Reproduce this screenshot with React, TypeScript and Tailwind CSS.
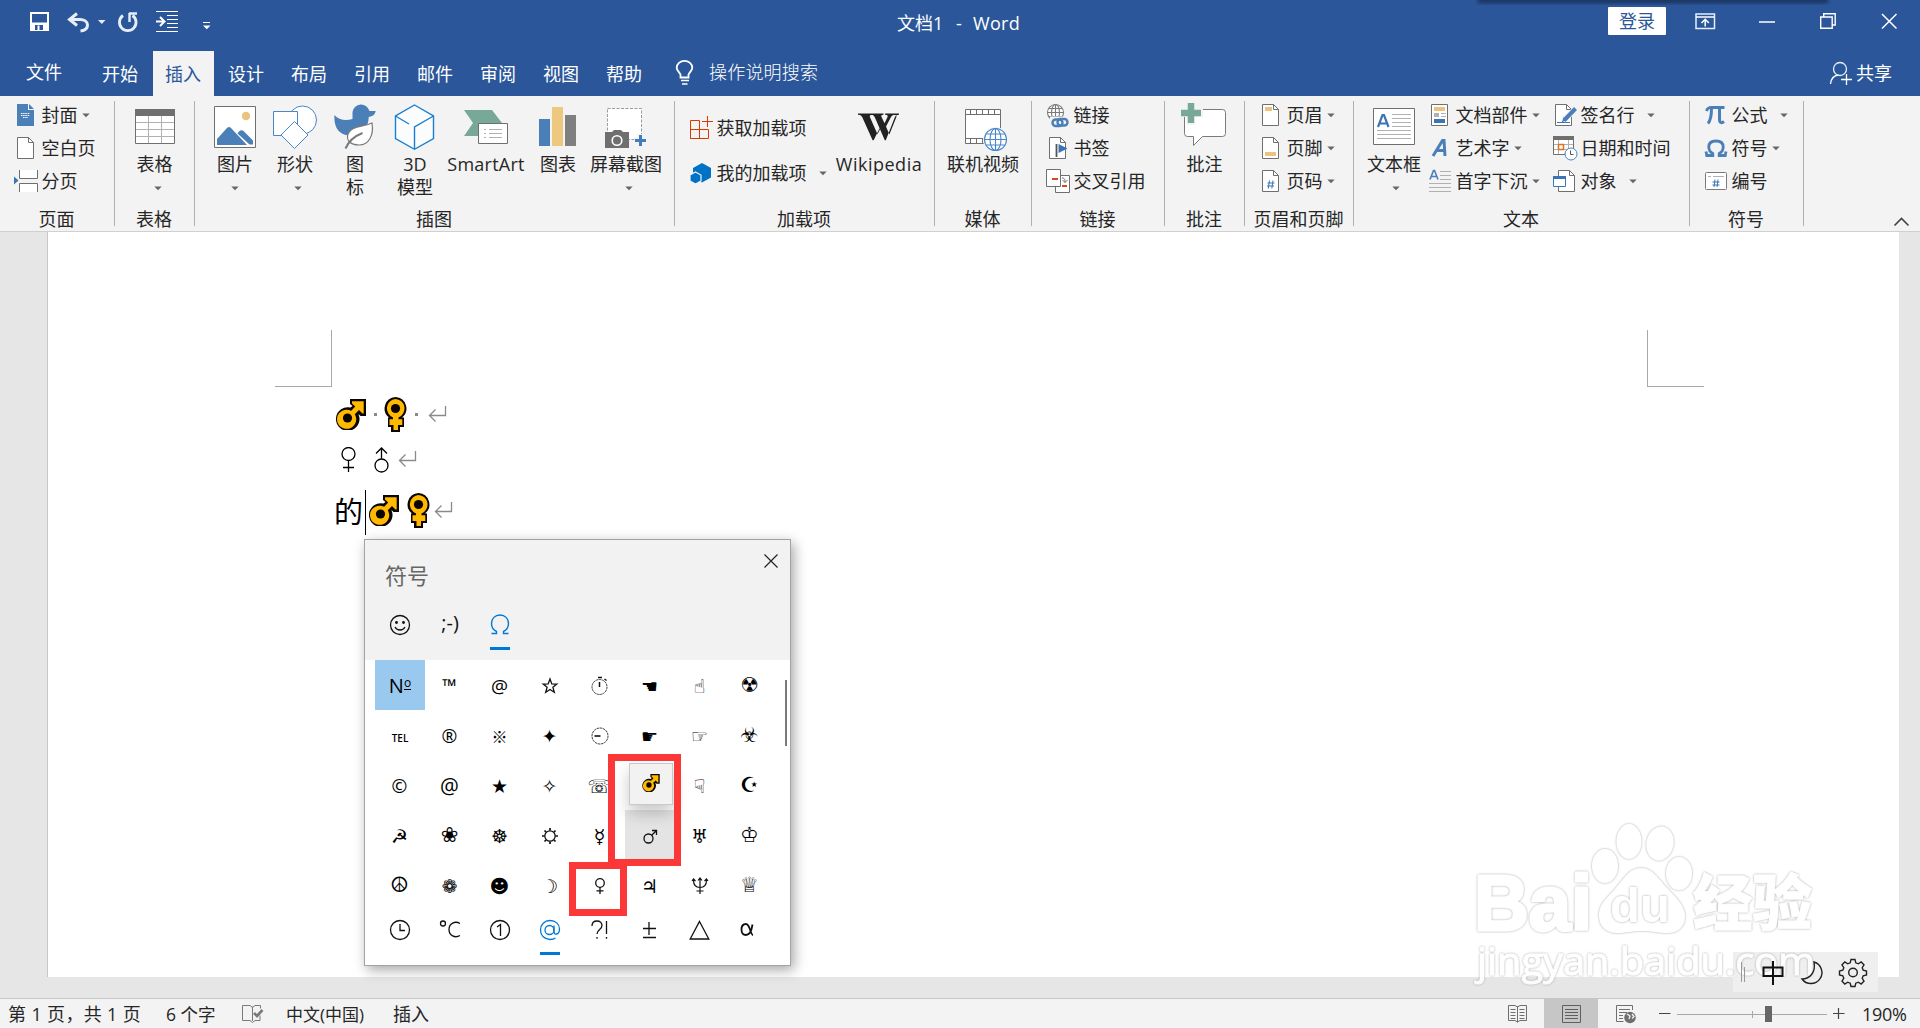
import React from "react";

const UI = "font-['Open_Sans','Noto_Sans_CJK_SC',sans-serif]";

type Box = { x: number; y: number; w: number; h: number; children?: React.ReactNode; className?: string };

/* Icon canvas: the drawing inside uses window coordinates. */
function Ico({ x, y, w, h, children, className = "" }: Box) {
  return (
    <svg className={"shrink-0 " + className} width={w} height={h} viewBox={`${x} ${y} ${w} ${h}`} fill="none">
      {children}
    </svg>
  );
}

function Arrow({ className = "" }: { className?: string }) {
  return (
    <svg className={"shrink-0 " + className} width="8" height="5" viewBox="0 0 8 5">
      <path d="M0.3 0.5h7.4L4 4.3z" fill="#666" />
    </svg>
  );
}

function Group({ label, width, children }: { label: string; width: string; children?: React.ReactNode }) {
  return (
    <div className={"flex h-[135px] shrink-0 " + width}>
      <div className="flex min-w-0 flex-1 flex-col">
        <div className="flex h-[110px]">{children}</div>
        <div className="flex h-[25px] justify-center whitespace-nowrap pr-px leading-[26px]">{label}</div>
      </div>
      <div className="mt-[5px] h-[125px] w-px bg-[#b1b1b1]" />
    </div>
  );
}

type BigProps = { x: number; w: number; width: string; lines: string[]; arrow?: string; children?: React.ReactNode };
function Big({ x, w, width, lines, arrow, children }: BigProps) {
  return (
    <div className={"flex shrink-0 flex-col items-center " + width}>
      <Ico x={x} y={96} w={w} h={57}>{children}</Ico>
      {lines.map((l) => (
        <span key={l} className="whitespace-nowrap leading-[23px]">{l}</span>
      ))}
      {arrow && <Arrow className={"mt-[10px] " + arrow} />}
    </div>
  );
}

type RowProps = { x: number; y: number; text: string; arrow?: string; children?: React.ReactNode; h?: number };
function Row({ x, y, text, arrow, children, h = 33 }: RowProps) {
  return (
    <div className="flex items-center">
      <Ico x={x} y={y} w={28} h={h}>{children}</Ico>
      <span className="-ml-[0.500px] mr-[0.500px] whitespace-nowrap leading-[33px]">{text}</span>
      {arrow && <Arrow className={arrow} />}
    </div>
  );
}

function Page({ x, y, fill = "#fff", stroke = "#6f6f6f" }: { x: number; y: number; fill?: string; stroke?: string }) {
  return (
    <g transform={`translate(${x} ${y})`}>
      <path d="M.5.5h11l5 5v16h-16z" fill={fill} stroke={stroke} />
      <path d="M11.5.5v5h5" stroke={stroke} />
    </g>
  );
}

function Globe({ cx, cy, r, c }: { cx: number; cy: number; r: number; c: string }) {
  return (
    <g stroke={c} strokeWidth="1.1">
      <circle cx={cx} cy={cy} r={r} fill="#fff" />
      <ellipse cx={cx} cy={cy} rx={r * 0.5} ry={r} />
      <path d={`M${cx} ${cy - r}V${cy + r}M${cx - r} ${cy}H${cx + r}M${cx - r * 0.85} ${cy - r / 2}H${cx + r * 0.85}M${cx - r * 0.85} ${cy + r / 2}H${cx + r * 0.85}`} />
    </g>
  );
}

function TitleBar() {
  return (
    <div className="flex h-[51px] items-start text-white">
      <Ico x={0} y={0} w={240} h={51}>
        <path d="M31 13h17v17h-17z" stroke="#fff" strokeWidth="2" />
        <path d="M30 22.500h19v8h-19z" fill="#fff" />
        <path d="M35 25h8v5h-8z" fill="#2b579a" />
        <path d="M37.500 25.500h2v4.500h-2z" fill="#fff" />
        <path d="M77 13.500l-7.500 6 7.500 6M70 19.500h10c4 0 7.500 2 7.500 5.500s-2.500 5.500-7 6" stroke="#e8eef8" strokeWidth="3" />
        <path d="M98 20h7.500l-3.700 4z" fill="#e8eef8" />
        <path d="M123 15.500a8.300 8.300 0 1 0 9.500 0" stroke="#e8eef8" strokeWidth="2.800" />
        <path d="M129 13.500h8M129.500 13v9" stroke="#e8eef8" strokeWidth="2.400" />
        <path d="M156 11.500h22M167 15.500h11M167 19.500h11M167 23.500h11M167 27.500h11M156 31.500h22" stroke="#fff" />
        <path d="M156 21.500h8M160 17l4.500 4.500-4.500 4.500" stroke="#fff" strokeWidth="2" />
        <path d="M203 22.500h7" stroke="#fff" />
        <path d="M203 25.500h7.500l-3.700 3.800z" fill="#fff" />
      </Ico>
      <div className="ml-[657px] flex w-[140px] whitespace-pre text-[18px] leading-[46px]">
        <span className="w-[59px]">文档1</span>
        <span className="w-[17px]">-</span>
        <span className="tracking-[0.300px]">Word</span>
      </div>
      <div className="ml-[571px] mt-[7px] flex h-[28px] w-[58px] items-center justify-center whitespace-nowrap rounded-[1px] bg-white text-[18px] leading-[28px] text-[#2b579a]">登录</div>
      <Ico x={1668} y={0} w={240} h={51} className="ml-[2px]">
        <path d="M1696 14h18.500v14.500h-18.500z" stroke="#e8eef8" strokeWidth="1.500" />
        <path d="M1696 17h18M1705.200 26.500v-7M1701.500 23l3.700-3.700 3.700 3.700" stroke="#fff" strokeWidth="1.500" />
        <path d="M1759 22h16" stroke="#fff" strokeWidth="1.500" />
        <path d="M1820.700 17h11.500v11.200h-11.500zM1823.700 17v-3.200h11.500V25h-3" stroke="#fff" strokeWidth="1.400" />
        <path d="M1882 14l14.500 14.500M1896.500 14L1882 28.500" stroke="#fff" strokeWidth="1.500" />
      </Ico>
    </div>
  );
}

const tabs = ["开始", "插入", "设计", "布局", "引用", "邮件", "审阅", "视图", "帮助"];

function TabBar() {
  return (
    <div className="flex h-[45px] text-[18px] text-white">
      <div className="w-[89px] pl-[26px] leading-[42px]">文件</div>
      {tabs.map((t) => (
        <div key={t} className={"mx-px w-[61px] text-center leading-[46px] " + (t === "插入" ? "bg-[#f3f3f3] text-[#2b579a]" : "")}>
          <span className="-ml-px">{t}</span>
        </div>
      ))}
      <Ico x={671} y={51} w={36} h={45} className="ml-[15px]">
        <path d="M680.500 77.500v-3c-1-2.500-3.800-4-3.800-6.800a7.700 6.700 0 0 1 15.600 0c0 2.800-2.800 4.300-3.800 6.800v3z" stroke="#fff" strokeWidth="1.800" />
        <path d="M681 80.500h8M682 84h5.500" stroke="#fff" strokeWidth="1.600" />
      </Ico>
      <div className="ml-[2px] w-[200px] font-light leading-[42px] tracking-[0.200px]">操作说明搜索</div>
      <Ico x={1828} y={51} w={26} h={45} className="ml-[919px]">
        <circle cx="1840" cy="69" r="6.500" stroke="#e8eef8" strokeWidth="1.300" />
        <path d="M1830.500 84c.5-5 3.500-8.500 8-9M1841 79.500h11M1846.500 74v11" stroke="#fff" strokeWidth="1.300" />
      </Ico>
      <div className="ml-[2px] leading-[44px]">共享</div>
    </div>
  );
}

function HashPage({ x, y }: { x: number; y: number }) {
  return (
    <>
      <Page x={x} y={y} />
      <path d={`M${x + 7.500} ${y + 10.500}l-1.200 8M${x + 11} ${y + 10.500}l-1.200 8M${x + 5.500} ${y + 13}h7M${x + 5} ${y + 16}h7`} stroke="#3a74b4" strokeWidth="1" />
    </>
  );
}

function Ribbon() {
  return (
    <div className="flex h-[136px] border-b border-[#d2d0ce] bg-[#f3f3f3] text-[18px] text-[#262626]">
      <Group label="页面" width="w-[115px]">
        <div className="ml-[14px] flex flex-col pt-[3px]">
          <Row x={14} y={99} text="封面" arrow="ml-[4px]">
            <path d="M17 104h11v6h6v16H17z" fill="#4a7fb8" />
            <path d="M29 104l5 5h-5z" fill="#4a7fb8" />
            <path d="M21 113.500h9M21 115.500h9M23 117.500h5" stroke="#fff" strokeDasharray="1.500 .7" />
          </Row>
          <Row x={14} y={132} text="空白页"><Page x={17} y={137} /></Row>
          <Row x={14} y={165} text="分页">
            <path d="M14 176.500l4.500 4-4.500 4z" fill="#3a74b4" />
            <path d="M19.500 170v8.500h18V170M19.500 192v-8.500h18v8.500" fill="#fff" stroke="#6f6f6f" />
          </Row>
        </div>
      </Group>
      <Group label="表格" width="w-[80px]">
        <Big x={115} w={80} width="w-[79px]" lines={["表格"]} arrow="translate-x-[3px]">
          <path d="M135.500 109.500h39v34h-39z" fill="#fff" stroke="#6f6f6f" />
          <path d="M135 109h40v7h-40z" fill="#6f6f6f" />
          <path d="M136 122.500h38M136 129.500h38M136 136.500h38M148.500 116v27M161.500 116v27" stroke="#b1b1b1" />
        </Big>
      </Group>
      <Group label="插图" width="w-[480px]">
        <div className="flex pl-[10px]">
          <Big x={205} w={60} width="w-[60px]" lines={["图片"]} arrow="translate-x-0">
            <path d="M214.500 106.500h41v41h-41z" fill="#fff" stroke="#6f6f6f" />
            <circle cx="246" cy="116" r="4.200" fill="#eac282" />
            <path d="M217 145v-6l10-11q2-2 4 0l16 17z" fill="#4a7fb8" />
            <path d="M237.500 133.500l1.500-2q2.500-2.500 5 0l9 9v4h-3.500z" fill="#4a7fb8" />
          </Big>
          <Big x={265} w={60} width="w-[60px]" lines={["形状"]} arrow="translate-x-[3px]">
            <circle cx="302.500" cy="120" r="14" fill="#fff" stroke="#4a86c8" />
            <path d="M273.500 111.500h24v24h-24z" fill="#fff" stroke="#4a86c8" />
            <path d="M294.500 121.500l13.500 13.500-13.500 13.500L281 135z" fill="#fff" stroke="#4a86c8" />
          </Big>
          <Big x={325} w={60} width="w-[60px]" lines={["图", "标"]}>
            <path d="M334.500 115c4 5 11 6 18 4v-7a8.700 8.700 0 0 1 17-1h6.200c-.5 3.500-3 5.500-7 6 0 9-6 18.500-18 18.500-13 0-17-10-16.200-20.500z" fill="#4a7fb8" />
            <path d="M372 123c2 12-3 22-13 22-9 0-13-5-11-11 3-8 15-7 24-11z" fill="#fff" stroke="#7a7a7a" strokeWidth="1.200" />
            <path d="M345.500 148.500c3-7 8-12 17-15.500" stroke="#7a7a7a" strokeWidth="2" />
          </Big>
          <Big x={385} w={60} width="w-[60px]" lines={["3D", "模型"]}>
            <path d="M414.500 105l19 11v22.500l-19 10.800-19-10.800V116z" fill="#fafcfe" stroke="#1a7fd0" strokeWidth="1.400" />
            <path d="M395.500 116l13.500 8M433.500 116l-19 11v22" stroke="#1a7fd0" strokeWidth="1.400" />
          </Big>
          <Big x={445} w={82} width="w-[82px] tracking-[0.250px]" lines={["SmartArt"]}>
            <path d="M464 110h28l10 13-10 13h-28l9-13z" fill="#78a898" />
            <path d="M478.500 123.500h29v20h-29z" fill="#fff" stroke="#6f6f6f" />
            <path d="M484 129.500h2M484 133.500h2M484 137.500h2M489 129.500h13M489 133.500h13M489 137.500h13" stroke="#b1b1b1" />
          </Big>
          <Big x={527} w={62} width="w-[62px]" lines={["图表"]}>
            <path d="M539 119h11v27h-11z" fill="#4a7fb8" />
            <path d="M552 107h11v39h-11z" fill="#eec87f" />
            <path d="M565 115h11v31h-11z" fill="#7f7f7f" />
          </Big>
          <Big x={589} w={74} width="w-[74px]" lines={["屏幕截图"]} arrow="translate-x-[3px]">
            <path d="M607.500 108.500h34v31h-34z" fill="#fff" stroke="#9a9a9a" strokeDasharray="3 1.500" />
            <path d="M606 132h6l2-2h7l2 2h6v16h-24v-16z" fill="#6f6f6f" />
            <circle cx="617" cy="140.500" r="4.800" stroke="#fff" strokeWidth="1.600" />
            <path d="M640.500 134v13M634.500 140.500h13" stroke="#f3f3f3" strokeWidth="6" />
            <path d="M640.500 135v11M635 140.500h11" stroke="#3f7cc0" strokeWidth="3" />
          </Big>
        </div>
      </Group>
      <Group label="加载项" width="w-[260px]">
        <div className="ml-[14px] flex w-[145px] shrink-0 flex-col pt-[10px]">
          <div className="flex h-[45px]">
            <Row x={689} y={106} h={45} text="获取加载项">
              <path d="M690.500 120.500h9v18h-9zM690.500 129.500h18v9h-18z" stroke="#d83b01" />
              <path d="M699.500 129.500v9M707.500 116v11M702 121.500h11" stroke="#d83b01" />
            </Row>
          </div>
          <div className="flex h-[45px]">
            <Row x={689} y={151} h={45} text="我的加载项" arrow="ml-[12px]">
              <path d="M702 163l9 5v9.500l-9 5-9-5V168z" fill="#0072c6" />
              <path d="M695.500 172l5.500 3v6l-5.500 3-5.500-3v-6z" fill="#0072c6" stroke="#f3f3f3" strokeWidth="1.200" />
            </Row>
          </div>
        </div>
        <Big x={834} w={90} width="w-[90px] tracking-[0.500px]" lines={["Wikipedia"]}>
          <path d="M858 113.500h14.500v1.200c-2.500.2-3.200.8-2.500 2.500l7.500 17 2.500-5-5-11.500c-.8-1.800-1.500-2.800-3.500-3v-1.200h12v1.200c-2.500.2-2.500.8-1.800 2.500l2.800 6 2.800-5.800c.9-1.900.4-2.600-2.200-2.700v-1.200h9.900v1.200c-2.200 0-3.300.8-4.200 2.700l-4.800 9.200 3.400 7.800 6.800-17c.8-1.900 0-2.600-2.500-2.700v-1.200H899v1.200c-2.500 0-3.600 1.200-4.300 2.900L885.800 140.300h-1l-5.200-12-6 12h-1l-10.200-22.700c-.7-1.700-1.800-2.900-4.400-2.900z" fill="#222" />
        </Big>
      </Group>
      <Group label="媒体" width="w-[97px]">
        <Big x={935} w={97} width="w-[96px]" lines={["联机视频"]}>
          <path d="M965.500 109.500h35v34h-35z" fill="#fff" stroke="#6f6f6f" />
          <path d="M965 114.500h36M965 138.500h36M970.500 109v5M976.500 109v5M982.500 109v5M988.500 109v5M994.500 109v5M970.500 139v5M976.500 139v5M982.500 139v5" stroke="#6f6f6f" />
          <circle cx="995.500" cy="139.500" r="12.500" fill="#f3f3f3" />
          <Globe cx={995.500} cy={139.500} r={11} c="#4a86c8" />
        </Big>
      </Group>
      <Group label="链接" width="w-[133px]">
        <div className="ml-[14px] flex flex-col pt-[3px]">
          <Row x={1046} y={99} text="链接">
            <Globe cx={1055.500} cy={112.500} r={8} c="#7a7a7a" />
            <rect x="1050" y="116.500" width="20" height="12" fill="#f3f3f3" />
            <rect x="1052.500" y="119.500" width="10" height="6.500" rx="3.200" stroke="#4a7fb8" strokeWidth="2.400" />
            <rect x="1057.500" y="119" width="10" height="6.500" rx="3.200" stroke="#4a7fb8" strokeWidth="2.400" />
          </Row>
          <Row x={1046} y={132} text="书签">
            <Page x={1049} y={137} />
            <path d="M1056.500 144v13" stroke="#555" strokeWidth="1.800" />
            <path d="M1058.500 144v9l9-4.500z" fill="#3a74b4" />
          </Row>
          <Row x={1046} y={165} text="交叉引用">
            <path d="M1055.500 175.500h14v17h-14z" fill="#fff" stroke="#6f6f6f" />
            <path d="M1046.500 169.500h14v17h-14z" fill="#fff" stroke="#6f6f6f" />
            <path d="M1052 179h6M1062 186h5" stroke="#d8481e" strokeWidth="2" />
            <path d="M1062 178c3 0 3 2 3 4.500M1062.500 180l2.500 2.500 2.500-2.500" stroke="#6f6f6f" />
          </Row>
        </div>
      </Group>
      <Group label="批注" width="w-[80px]">
        <Big x={1165} w={80} width="w-[79px]" lines={["批注"]}>
          <path d="M1184.500 109.500h38q3 0 3 3v21q0 3-3 3h-20l-9 9v-9h-6q-3 0-3-3z" fill="#fff" stroke="#7a7a7a" />
          <path d="M1190.500 101v24M1179 113h24" stroke="#f3f3f3" strokeWidth="8" />
          <path d="M1191 103v20M1181 113h20" stroke="#78a898" strokeWidth="6.500" />
        </Big>
      </Group>
      <Group label="页眉和页脚" width="w-[109px]">
        <div className="ml-[14px] flex flex-col pt-[3px]">
          <Row x={1259} y={99} text="页眉" arrow="ml-[4px]">
            <Page x={1262} y={104} />
            <path d="M1265 107h7v4h-7z" fill="#eac282" />
          </Row>
          <Row x={1259} y={132} text="页脚" arrow="ml-[4px]">
            <Page x={1262} y={137} />
            <path d="M1265 152h11v4h-11z" fill="#eac282" />
          </Row>
          <Row x={1259} y={165} text="页码" arrow="ml-[4px]"><HashPage x={1262} y={170} /></Row>
        </div>
      </Group>
      <Group label="文本" width="w-[336px]">
        <Big x={1354} w={74} width="ml-[3px] w-[74px]" lines={["文本框"]} arrow="translate-x-[2px]">
          <path d="M1370.500 108.500h41v36h-41z" fill="#fff" stroke="#6f6f6f" />
          <path d="M1389 114.500h19M1389 118.500h19M1389 122.500h19M1389 126.500h19M1374 130.500h34M1374 134.500h34M1374 138.500h34" stroke="#b1b1b1" />
          <path d="M1375 127l4.500-12h1.500l4.500 12M1377 123.500h6.500" stroke="#3a74b4" strokeWidth="2.200" />
        </Big>
        <div className="ml-[-3px] flex w-[125px] flex-col pt-[3px]">
          <Row x={1428} y={99} text="文档部件" arrow="ml-[4px]">
            <path d="M1431.500 104.500h16v21h-16z" fill="#fff" stroke="#6f6f6f" />
            <path d="M1434 107h11v4h-11z" fill="#eac282" />
            <path d="M1434 113h5v4h-5z" fill="#b1b1b1" />
            <path d="M1441 113.500h5M1441 116.500h5" stroke="#b1b1b1" />
            <path d="M1434 119h11v4h-11z" fill="#3a74b4" />
          </Row>
          <Row x={1428} y={132} text="艺术字" arrow="ml-[4px]">
            <path d="M1433 156l9.500-15.500h1.500l1 15.500M1436.500 150.500h8" stroke="#4a7fb8" strokeWidth="3" />
          </Row>
          <Row x={1428} y={165} text="首字下沉" arrow="ml-[4px]">
            <path d="M1430 179.500l3.500-9h1l3.500 9M1431 176.500h6" stroke="#4a7fb8" strokeWidth="1.600" />
            <path d="M1440 171.500h11M1440 175.500h11M1440 179.500h11M1429 183.500h22M1429 187.500h22M1429 191.500h22" stroke="#b1b1b1" />
          </Row>
        </div>
        <div className="flex flex-col pt-[3px]">
          <Row x={1553} y={99} text="签名行" arrow="ml-[12px]">
            <path d="M1555.500 104.500h11l5 5v16h-16z" fill="#fff" stroke="#6f6f6f" />
            <path d="M1566.500 104.500v5h5" stroke="#6f6f6f" />
            <path d="M1557 122.500h13" stroke="#3a74b4" />
            <path d="M1576 109l-12.500 11" stroke="#f3f3f3" strokeWidth="6" />
            <path d="M1575.500 108.500l-11.500 12" stroke="#4a7fb8" strokeWidth="4" />
            <path d="M1564 117l3 3-5.500 2.500z" fill="#4a7fb8" />
          </Row>
          <Row x={1553} y={132} text="日期和时间">
            <path d="M1553.500 136.500h20v18h-20z" fill="#fff" stroke="#6f6f6f" />
            <path d="M1553 136h21v4h-21z" fill="#6f6f6f" />
            <path d="M1558.500 140v14M1568.500 140v14M1554 144.500h19M1554 149.500h19" stroke="#b1b1b1" />
            <path d="M1558.500 144.500h5v5h-5z" fill="#fff" stroke="#e07020" strokeWidth="1.500" />
            <circle cx="1571" cy="154" r="6" fill="#fff" stroke="#4a86c8" />
            <path d="M1570.500 150.500v4h3" stroke="#555" />
          </Row>
          <Row x={1553} y={165} text="对象" arrow="ml-[12px]">
            <Page x={1558} y={170} />
            <path d="M1553.500 176.500h12v10h-12z" fill="#fff" stroke="#3a74b4" />
            <path d="M1553 176h13v3h-13z" fill="#3a74b4" />
          </Row>
        </div>
      </Group>
      <Group label="符号" width="w-[114px]">
        <div className="ml-[14px] flex flex-col pt-[3px]">
          <Row x={1704} y={99} text="公式" arrow="ml-[12px]">
            <path d="M1706.500 111c1-3 2-3.500 5-3.500h13M1711.500 108c0 6-.5 12-3.500 15.500M1719.500 108v11c0 4 2 4.500 4.500 2.500" stroke="#4a7fb8" strokeWidth="3" />
          </Row>
          <Row x={1704} y={132} text="符号" arrow="ml-[4px]">
            <path d="M1706 151.500l.8 4h6v-2c-3-1.500-4-4-4-6.500 0-4 2.500-6 7.200-6s7.200 2 7.200 6c0 2.500-1 5-4 6.500v2h6l.8-4" stroke="#4a7fb8" strokeWidth="2.800" />
          </Row>
          <Row x={1704} y={165} text="编号">
            <rect x="1705.500" y="172.500" width="21" height="17" fill="#fff" stroke="#7a7a7a" rx="1" />
            <path d="M1708 176.500h3M1713 176.500h11" stroke="#b1b1b1" />
            <path d="M1715 179.500l-1 7.500M1718 179.500l-1 7.500M1712.500 182h7M1712.500 185h7" stroke="#3a74b4" />
          </Row>
        </div>
      </Group>
      <Ico x={1890} y={213} w={22} h={18} className="ml-[86px] mt-[117px]">
        <path d="M1894.500 225.500l7-7 7 7" stroke="#444" strokeWidth="1.600" />
      </Ico>
    </div>
  );
}

function Male({ className = "" }: { className?: string }) {
  return (
    <svg className={"shrink-0 " + className} viewBox="0 0 30 31" fill="none">
      <path d="M14 0h16v17H24.500l-2-2 1 4a11.800 11.800 0 1 1-9-10.500l2-1.500-2.500-2z" fill="#0a0500" />
      <path d="M16 2.300h11.700V14.500h-1.200l-3.500-3.500-4.200 4.200a9.600 9.600 0 1 1-3.600-3.400l4-4.300L16 4.500z" fill="#ffb900" />
      <circle cx="11.500" cy="19" r="4.600" fill="#0a0500" />
    </svg>
  );
}

function Female({ className = "" }: { className?: string }) {
  return (
    <svg className={"shrink-0 " + className} width="23" height="35" viewBox="0 0 23 35" fill="none">
      <path d="M11.500 0a11.500 11.500 0 0 1 6.500 20.500h2V30h-4v5H7v-5H4v-9.500h1A11.500 11.500 0 0 1 11.500 0z" fill="#0a0500" />
      <path d="M11.500 1.900a9.600 9.600 0 0 1 3 18.500V22.300H18.300v5.600h-4.300V33h-4.500V27.900H5.500V22.300H9v-1.900a9.600 9.600 0 0 1 2.500-18.500z" fill="#ffb900" />
      <circle cx="11.500" cy="11.500" r="4.600" fill="#0a0500" />
    </svg>
  );
}

function Return({ className = "" }: { className?: string }) {
  return (
    <svg className={"shrink-0 " + className} width="19" height="17" viewBox="0 0 19 17" fill="none">
      <path d="M17.500 0v9.500H1.500M7.500 3.500l-6 6 6 6" stroke="#8a8a8a" strokeWidth="1.300" />
    </svg>
  );
}

function DocumentText() {
  return (
    <div className="flex flex-col pl-[288px] pt-[10px]">
      <div className="flex h-[35px] items-start">
        <Male className="mt-[2px] h-[31px] w-[30px]" />
        <span className="ml-[8px] mt-[16px] h-[3px] w-[3px] bg-[#8a8a8a]" />
        <Female className="ml-[7px]" />
        <span className="ml-[8px] mt-[16px] h-[3px] w-[3px] bg-[#8a8a8a]" />
        <Return className="ml-[10px] mt-[9px]" />
      </div>
      <div className="mt-[15px] flex h-[26px] items-start pl-[4px]">
        <svg width="50" height="26" viewBox="0 0 50 26" fill="none" stroke="#000" strokeWidth="1.300" className="shrink-0">
          <circle cx="8.500" cy="7" r="6.500" />
          <path d="M8.500 14v11M3 20.500h11" />
          <circle cx="41.500" cy="18.500" r="6.500" />
          <path d="M41.500 11.500V.500M36 6.500L41.500 1 47 6.500" />
        </svg>
        <Return className="ml-[8px] mt-[4px]" />
      </div>
      <div className="mt-[17px] flex h-[45px] items-start">
        <span className="-ml-[2px] w-[31px] font-['Noto_Sans_CJK_SC',sans-serif] text-[29px] leading-[41px] text-black">的</span>
        <span className="h-[45px] w-px bg-black" />
        <Male className="ml-[3px] mt-[5px] h-[31px] w-[30px]" />
        <Female className="ml-[8px] mt-[3px]" />
        <Return className="ml-[4px] mt-[12px]" />
      </div>
    </div>
  );
}

const grid: string[] = [
  "№", "™", "@", "☆", "⏱", "☚", "☝", "☢",
  "℡", "®", "※", "✦", "⏲", "☛", "☞", "☣",
  "©", "@", "★", "✧", "☏", "", "☟", "☪",
  "☭", "❀", "☸", "☼", "☿", "♂", "♅", "♔",
  "☮", "❁", "☻", "☽", "♀", "♃", "♆", "♕",
];

/* Thin-line glyphs, centred on a 20 by 20 canvas. */
const drawn: Record<string, React.ReactNode> = {
  "☆": <path d="M10 3l1.800 4.900 5 .2-3.900 3.200 1.400 5L10 13.500l-4.300 2.800 1.400-5-3.900-3.200 5-.2z" strokeWidth="1.300" />,
  "⏱": <><circle cx="9.500" cy="11" r="7.500" strokeDasharray="2.500 .6" strokeWidth=".8" /><path d="M9.500 6v5M8 1.500h4M14.500 3l2 1.500" strokeWidth="1.500" /></>,
  "⏲": <><circle cx="10" cy="10" r="8" strokeDasharray="2.500 .6" strokeWidth=".8" /><path d="M4.500 10h6" strokeWidth="1.600" /></>,
  "☼": <><circle cx="10" cy="10" r="5.200" strokeWidth="1.300" /><path d="M10 2v2.500M10 15.500V18M2 10h2.500M15.500 10H18M4.500 4.500l1.500 1.500M14 14l1.500 1.500M15.500 4.500L14 6M6 14l-1.500 1.500" strokeWidth="1.700" /></>,
  "♂": <><circle cx="8.500" cy="12.500" r="4.500" strokeWidth="1.300" /><path d="M11.700 9.300L16 5M12 4.500h4.500V9" strokeWidth="1.300" /></>,
  "♀": <><circle cx="10" cy="7" r="4.300" strokeWidth="1.300" /><path d="M10 11.500v6.500M6.500 14.800h7" strokeWidth="1.300" /></>,
  "♆": <path d="M10 2v16M3.500 4c0 5 2 7.500 6.500 7.500s6.500-2.500 6.500-7.500M8 4.500L10 2l2 2.500M2 5l1.500-2L5.500 5M14.500 5l2-2L18 5M6.500 15h7" strokeWidth="1.200" />,
};

function Cell({ g, i }: { g: string; i: number }) {
  const tone = i === 0 ? "bg-[#99c9ef]" : g === "♂" ? "bg-[#e4e4e4]" : "";
  if (drawn[g]) {
    return (
      <div className={"flex h-[50px] w-[50px] items-center justify-center pt-[2px] " + tone}>
        <svg width="20" height="20" viewBox="0 0 20 20" fill="none" stroke="#111">{drawn[g]}</svg>
      </div>
    );
  }
  if (g === "№") {
    return (
      <div className="flex h-[50px] w-[50px] items-start justify-center bg-[#99c9ef] text-black">
        <span className="text-[20px] leading-[52px]">N</span>
        <span className="mt-[18px] h-[12px] border-b border-black text-[12px] leading-[9px]">o</span>
      </div>
    );
  }
  if (g === "℡") {
    return <div className="h-[50px] w-[50px] text-center text-[10px] font-semibold leading-[57px] text-black">TEL</div>;
  }
  const face =
    g === "™" || g === "@" || g === "®" || g === "©"
      ? i === 17
        ? "font-['Open_Sans',sans-serif] text-[21px] leading-[52px]"
        : "font-['Open_Sans',sans-serif] text-[19px] leading-[52px]"
      : g === "※"
        ? "font-['Noto_Sans_CJK_SC',sans-serif] text-[16px] font-medium leading-[52px]"
        : g === "☢" || g === "☣" || g === "☪" || g === "♔" || g === "♕" || g === "☮" || g === "❀"
          ? "font-['DejaVu_Sans',sans-serif] text-[21px] leading-[51px]"
          : "font-['DejaVu_Sans','Noto_Sans_CJK_SC',sans-serif] text-[19px] leading-[52px]";
  return <div className={"h-[50px] w-[50px] overflow-hidden pr-px text-center text-black " + tone + " " + face}>{g}</div>;
}

function SymbolPanel() {
  return (
    <div className="absolute left-[364px] top-[539px] flex h-[427px] w-[427px] flex-col border border-[#a3a3a3] bg-white shadow-[3px_4px_12px_rgba(0,0,0,0.35)]">
      <div className="flex h-[120px] shrink-0 flex-col bg-[#f2f2f2]">
        <div className="flex h-[59px] justify-between pl-[20px] pr-[12px]">
          <span className="pt-[19px] text-[22px] leading-[32px] text-[#666]">符号</span>
          <svg className="mt-[14px]" width="14" height="14" viewBox="0 0 14 14" stroke="#222" strokeWidth="1.200"><path d="M.5.5l13 13M13.500.5l-13 13" /></svg>
        </div>
        <div className="flex pl-[10px]">
          <div className="flex h-[51px] w-[50px] items-center justify-center">
            <svg width="22" height="22" viewBox="0 0 22 22" fill="none" stroke="#111" strokeWidth="1.300">
              <circle cx="11" cy="11" r="9.500" />
              <path d="M6 13c2 4 8 4 10 0" />
              <circle cx="7.500" cy="8.500" r=".8" fill="#111" />
              <circle cx="14.500" cy="8.500" r=".8" fill="#111" />
            </svg>
          </div>
          <div className="flex h-[51px] w-[50px] items-center justify-center pb-[3px] text-[20px] text-[#111]">;-)</div>
          <div className="flex h-[51px] w-[50px] flex-col items-center">
            <svg className="mt-[15px] shrink-0" width="20" height="21" viewBox="0 0 20 21" fill="none" stroke="#0078d7" strokeWidth="1.400">
              <path d="M1.500 19.500h5v-2C3.500 16 1.500 13 1.500 9.500 1.500 4.500 5 1 10 1s8.500 3.500 8.500 8.500c0 3.500-2 6.500-5 8v2h5" />
            </svg>
            <span className="mt-[12px] h-[3px] w-[20px] shrink-0 bg-[#0078d7]" />
          </div>
        </div>
      </div>
      <div className="flex">
        <div className="ml-[10px] grid w-[400px] grid-cols-[repeat(8,50px)]">
          {grid.map((g, i) => <Cell key={i} g={g} i={i} />)}
        </div>
        <div className="ml-[10px] mt-[20px] h-[66px] w-[2px] bg-[#7a7a7a]" />
      </div>
      <Ico x={375} y={910} w={400} h={46} className="ml-[10px]">
        <g stroke="#111" strokeWidth="1.300">
          <circle cx="400" cy="930" r="9.500" />
          <path d="M400 924v6.500h5" />
          <circle cx="443" cy="923.500" r="2.500" />
          <path d="M460 923.500c-5-3-11 0-11 6s6 9 11 6" />
          <circle cx="500" cy="930" r="9.500" />
          <path d="M497 927l3.500-2.500V936" />
          <path d="M592 926c0-3 2-5 5-5s5 2 5 4.500c0 4-5 4-5 8.500M597 937v1.800M606.500 921v13M606.500 937v1.800" />
          <path d="M649 922v13M643 928.500h13M643 937.500h13M699.500 921.500l9.300 17.500h-18.600z" />
          <path d="M752.500 924.500c-1 7-3 10.500-6.500 10.500-3 0-4.500-2.500-4.500-5.500s1.500-5.500 4.500-5.500c4 0 4.500 11 7 11" strokeWidth="1.800" />
        </g>
        <g stroke="#0078d7" strokeWidth="1.300">
          <circle cx="549.500" cy="930" r="4.500" />
          <path d="M554 925.500v6c0 4 5.500 3.500 5.500-2.500 0-5-4-8.500-9.500-8.500s-9.500 4-9.500 9.500 4 9.500 9.500 9.500c2 0 4-.4 5.500-1.500" />
        </g>
        <path d="M540 952h20v3h-20z" fill="#0078d7" />
      </Ico>
    </div>
  );
}

function Overlays() {
  return (
    <>
      <div className="absolute left-[629px] top-[763px] flex h-[42px] w-[44px] items-center justify-center border border-[#c9c9c9] bg-[#f2f2f2] shadow-[0_8px_16px_rgba(0,0,0,0.22)]">
        <Male className="mb-[2px] h-[18px] w-[18px]" />
      </div>
      <div className="absolute left-[608px] top-[754px] h-[112px] w-[73px] border-[7px] border-[#fb3737]" />
      <div className="absolute left-[569px] top-[862px] h-[54px] w-[58px] border-[7px] border-[#fb3737]" />
      <div className="absolute left-[1733px] top-[952px] h-[40px] w-[145px] bg-[#efefef]" />
      <div className="absolute left-[1460px] top-[815px] opacity-90">
        <Ico x={1460} y={815} w={380} h={180}>
          <defs>
            <filter id="halo" x="-5%" y="-5%" width="110%" height="110%">
              <feDropShadow dx="0" dy="0" stdDeviation="1.300" floodColor="#909090" floodOpacity="0.900" />
            </filter>
          </defs>
          <g fill="#fff" filter="url(#halo)">
            <ellipse cx="1605" cy="866" rx="13" ry="17" />
            <ellipse cx="1629" cy="841.500" rx="12.500" ry="17.500" />
            <ellipse cx="1660" cy="843.500" rx="13.500" ry="17" transform="rotate(12 1660 843.500)" />
            <ellipse cx="1679" cy="873.500" rx="13" ry="16.500" />
            <path d="M1641 868c12 0 18 12 28 22s16 18 16 26c0 12-9 18-20 17-10-1-14-2-24-2s-14 2-24 2c-11 0-19-7-18-20 1-10 9-16 16-24 8-9 14-21 26-21z" />
          </g>
          <g filter="url(#halo)" fill="#fff" stroke="#fff" strokeLinejoin="round" fontWeight="700">
            <text x="1474" y="930" fontSize="77" strokeWidth="3" textLength="118" lengthAdjust="spacingAndGlyphs" fontFamily="Liberation Sans">Bai</text>
            <text x="1693" y="925" fontSize="60" fontWeight="900" strokeWidth="1" textLength="119" lengthAdjust="spacingAndGlyphs" fontFamily="Noto Sans CJK SC">经验</text>
            <text x="1610" y="922" fontSize="48" strokeWidth="0" textLength="60" lengthAdjust="spacingAndGlyphs" fontFamily="Liberation Sans">du</text>
          </g>
          <text filter="url(#halo)" x="1477" y="975" fontSize="38" fill="#fff" stroke="#fff" strokeWidth="1" textLength="338" lengthAdjust="spacingAndGlyphs" fontFamily="Open Sans">jingyan.baidu.com</text>
        </Ico>
      </div>
      <div className="absolute left-[1733px] top-[952px] flex h-[40px] w-[145px]">
        <Ico x={1733} y={952} w={145} h={40}>
          <path d="M1741.500 962v20M1744.500 967v15" stroke="#999" />
          <path d="M1763.500 967.500h19v8.500h-19zM1773 961v24" stroke="#111" strokeWidth="2" />
          <path d="M1814 962a11 11 0 1 1-12 17c8 0 14-7 12-17z" stroke="#222" strokeWidth="1.400" />
          <circle cx="1853" cy="972.500" r="4.300" stroke="#222" strokeWidth="1.400" />
          <path d="M1851 961h4l.8 3.300 2.500 1 2.900-1.800 2.800 2.800-1.800 2.900 1 2.500 3.300.8v4l-3.300.8-1 2.500 1.800 2.900-2.800 2.800-2.900-1.800-2.500 1-.8 3.300h-4l-.8-3.300-2.500-1-2.900 1.800-2.800-2.800 1.800-2.900-1-2.500-3.300-.8v-4l3.300-.8 1-2.500-1.800-2.900 2.800-2.800 2.900 1.800 2.500-1z" transform="translate(0 -1.500)" stroke="#222" strokeWidth="1.400" />
        </Ico>
      </div>
      <div className="absolute left-[1475px] top-0 h-[5px] w-[356px] overflow-hidden">
        <div className="mx-[5px] h-px bg-[#1d3a66] shadow-[0_0_4px_2px_rgba(20,40,75,0.85)]" />
      </div>
    </>
  );
}

function StatusBar() {
  return (
    <div className="flex h-[30px] border-t border-[#c6c6c6] bg-[#f3f3f3] text-[18px] leading-[31px] text-[#262626]">
      <span className="ml-[8px] w-[158px] whitespace-nowrap tracking-[0.350px]">第 1 页，共 1 页</span>
      <span className="w-[73px] whitespace-nowrap text-[17.500px]">6 个字</span>
      <Ico x={239} y={999} w={28} h={29}>
        <path d="M252.500 1006.500v14.500M250 1005.500h-7.500v15h7.500l2.500 2 2.500-2h5v-5M255 1005.500l-2.500 2-2.500-2M255 1005.500h5.500v3" stroke="#7a7a7a" />
        <path d="M254 1013l3 3 5.500-6" stroke="#7a7a7a" strokeWidth="2.600" />
      </Ico>
      <span className="ml-[19px] w-[107px] whitespace-nowrap text-[17px]">中文(中国)</span>
      <span className="w-[60px]">插入</span>
      <Ico x={1490} y={999} w={54} h={29} className="ml-[1037px]">
        <path d="M1517.500 1006v16.500M1515 1005.500h-6.500v15h6.500l2.500 1.500 2.500-1.500h6.500v-15h-6.500l-2.500 1.500z" stroke="#6f6f6f" />
        <path d="M1510.500 1009.500h5M1510.500 1012.500h5M1510.500 1015.500h5M1510.500 1018.500h5M1519.500 1009.500h5M1519.500 1012.500h5M1519.500 1015.500h5M1519.500 1018.500h5" stroke="#6f6f6f" />
      </Ico>
      <Ico x={1544} y={999} w={54} h={29} className="bg-[#c6c6c6]">
        <path d="M1562.500 1005.500h18v17h-18zM1565 1009.500h13M1565 1012.500h13M1565 1015.500h13M1565 1018.500h13" stroke="#5f5f5f" />
      </Ico>
      <Ico x={1598} y={999} w={260} h={29}>
        <path d="M1632.500 1010v-4.500h-16v16h7M1619 1009.500h11M1619 1012.500h8M1619 1015.500h4M1619 1018.500h4" stroke="#6f6f6f" />
        <circle cx="1630" cy="1017.500" r="5.800" fill="#6f6f6f" />
        <path d="M1627 1014l3 2-1 3M1632 1014l2 2.500-2 2" stroke="#f3f3f3" strokeWidth="1.300" />
        <path d="M1659 1013.500h11.500M1833 1013.500h11.500M1838.500 1008v11" stroke="#444" strokeWidth="1.200" />
        <path d="M1677 1014.500h150M1752.500 1011v7" stroke="#a8a8a8" />
        <path d="M1765 1006h7v16h-7z" fill="#666" />
      </Ico>
      <span className="ml-[4px] whitespace-nowrap tracking-[-0.300px]">190%</span>
    </div>
  );
}

export default function App() {
  return (
    <div className={"relative flex h-[1028px] w-[1920px] flex-col overflow-hidden bg-[#e6e6e6] " + UI}>
      <div className="bg-[#2b579a]">
        <TitleBar />
        <TabBar />
      </div>
      <Ribbon />
      <div className="flex h-[766px]">
        <div className="ml-[47px] h-[745px] w-[1852px] border-l border-[#c6c6c6] bg-white">
          <div className="flex justify-between pl-[227px] pr-[195px] pt-[98px]">
            <div className="h-[57px] w-[57px] border-b border-r border-[#a8a8a8]" />
            <div className="h-[57px] w-[57px] border-b border-l border-[#a8a8a8]" />
          </div>
          <DocumentText />
        </div>
      </div>
      <StatusBar />
      <SymbolPanel />
      <Overlays />
    </div>
  );
}
